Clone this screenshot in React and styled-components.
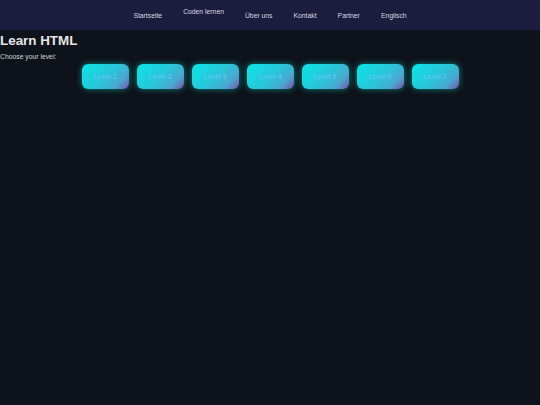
import React from "react"
import styled, { createGlobalStyle } from "styled-components"

const Global = createGlobalStyle`
    html, body {
        margin: 0;
        padding: 0;
        background: #0e121a;
        font-family: "Liberation Sans", Arial, sans-serif;
    }
`

const Page = styled.div`
    min-height: 405px;
    background: #0e121a;
    color: #e4e4e4;
`

const Nav = styled.nav`
    height: 30px;
    background: #1c1d3e;
    display: flex;
    justify-content: center;
    align-items: center;
    gap: 21px;
`

const NavItem = styled.a`
    font-size: 6.8px;
    color: #d6d6e0;
    text-decoration: none;
    transform: translateY(${(p) => (p.$active ? "-4px" : "0")});
`

const Title = styled.h1`
    margin: 0;
    padding-top: 3px;
    font-size: 13.4px;
    font-weight: bold;
    color: #e6e6e6;
`

const Sub = styled.p`
    margin: 5px 0 0;
    font-size: 6.8px;
    color: #d6d6d6;
`

const Levels = styled.div`
    display: flex;
    justify-content: center;
    gap: 8px;
    margin-top: 4px;
`

const LevelButton = styled.button`
    width: 47px;
    height: 25px;
    border: none;
    border-radius: 6px;
    background: linear-gradient(135deg, #08e6e6 0%, #28c6d8 50%, #4aa8d0 78%, #7a4ea8 100%);
    box-shadow: 0 0 6px rgba(0, 215, 200, 0.6);
    color: #5cc6f2;
    font-family: "Liberation Sans", Arial, sans-serif;
    font-size: 6.8px;
    font-weight: bold;
    padding: 0;
`

const navLinks = ["Startseite", "Coden lernen", "Über uns", "Kontakt", "Partner", "Englisch"]
const levels = [1, 2, 3, 4, 5, 6, 7]

export default function App() {
    return (
        <Page>
            <Global />
            <Nav>
                {navLinks.map((l) => (
                    <NavItem key={l} $active={l === "Coden lernen"}>{l}</NavItem>
                ))}
            </Nav>
            <Title>Learn HTML</Title>
            <Sub>Choose your level:</Sub>
            <Levels>
                {levels.map((n) => (
                    <LevelButton key={n}>Level {n}</LevelButton>
                ))}
            </Levels>
        </Page>
    )
}
